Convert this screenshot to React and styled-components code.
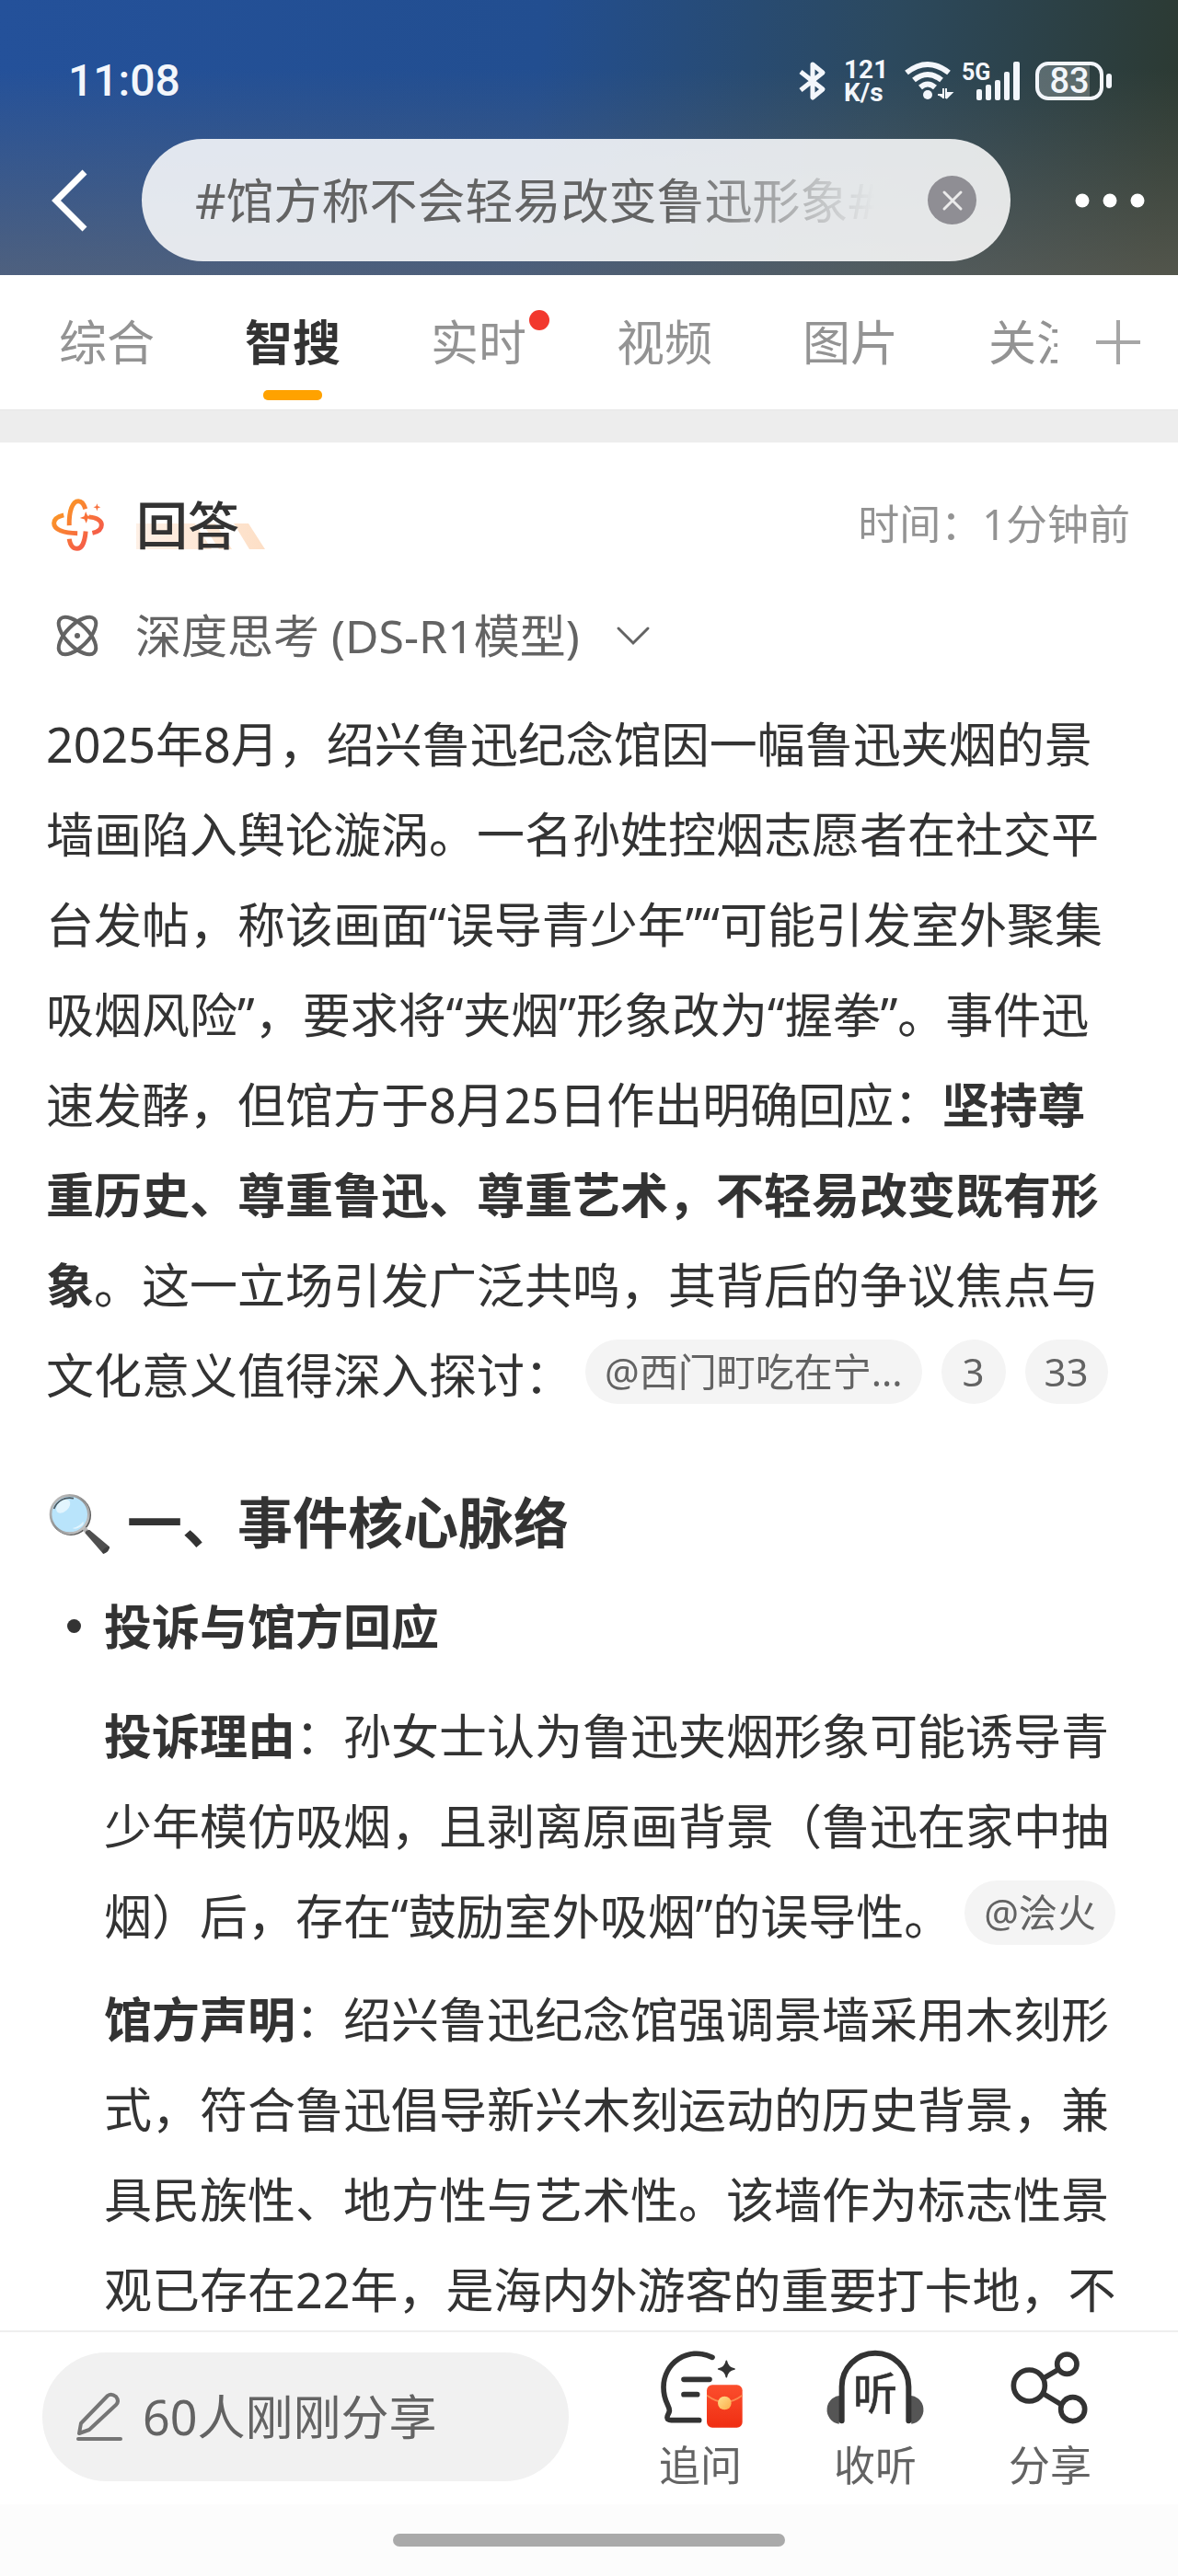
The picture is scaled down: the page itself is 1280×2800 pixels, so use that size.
import styled, { createGlobalStyle } from "styled-components";

const GlobalStyle = createGlobalStyle`
  * {
    box-sizing: border-box;
  }
  body {
    margin: 0;
    background: #ffffff;
    color: #333333;
    font-family: "Noto Sans", "Noto Sans CJK SC", sans-serif;
  }
  button,
  input {
    border: 0;
    padding: 0;
    background: none;
    color: inherit;
    font: inherit;
  }
  a {
    color: inherit;
    text-decoration: none;
  }
  h1, h2, h3, p, ul {
    margin: 0;
    padding: 0;
    font-weight: 400;
  }
  svg {
    display: block;
    flex: none;
    overflow: visible;
  }
`;

const Page = styled.div`
  height: 100vh;
  display: flex;
  flex-direction: column;
  overflow: hidden;
`;

/* header */
const Header = styled.header`
  flex: none;
  padding-bottom: 15px;
  background:
    linear-gradient(180deg, rgba(120, 112, 100, 0) 25%, rgba(120, 112, 100, 0.5) 100%),
    linear-gradient(97deg, #24519a 0%, #224e90 45%, #2c495e 74%, #2c3a33 98%);
`;

const StatusBar = styled.div`
  height: 151px;
  padding: 24px 72px 0 74px;
  display: flex;
  align-items: center;
  justify-content: space-between;
  color: #f3f6fb;
  font-family: Roboto, sans-serif;
`;

const Clock = styled.span`
  font-size: 48px;
  font-weight: 500;
`;

const StatusIcons = styled.div`
  display: flex;
  align-items: center;
`;

const NetSpeed = styled.span`
  width: 48px;
  margin: 0 18px 0 20px;
  display: flex;
  flex-direction: column;
  font-size: 28px;
  font-weight: 700;
  line-height: 25px;
`;

const Battery = styled.span`
  width: 74px;
  height: 42px;
  margin: 0 9px 0 16px;
  position: relative;
  display: flex;
  align-items: center;
  justify-content: center;
  border: 4px solid currentColor;
  border-radius: 14px;
  background: linear-gradient(90deg, rgba(255, 255, 255, 0.22) 83%, transparent 83%);
  font-size: 38px;
  font-weight: 500;
  line-height: 34px;

  &::after {
    content: "";
    position: absolute;
    right: -13px;
    width: 6px;
    height: 16px;
    border-radius: 3px;
    background: currentColor;
  }
`;

const SearchRow = styled.div`
  display: flex;
  align-items: center;
`;

const BackButton = styled.button`
  width: 154px;
  height: 133px;
  padding-left: 55px;
`;

const SearchBox = styled.form`
  flex: 1;
  min-width: 0;
  height: 133px;
  padding: 0 37px 0 58px;
  display: flex;
  align-items: center;
  gap: 58px;
  border-radius: 67px;
  background: rgba(255, 255, 255, 0.86);
`;

const SearchInput = styled.input`
  flex: 1;
  min-width: 0;
  height: 80px;
  padding-bottom: 4px;
  color: #636363;
  font-size: 52px;
  outline: none;
  mask-image: linear-gradient(90deg, #000 70%, transparent 100%);
`;

const ClearButton = styled.button`
  width: 53px;
  height: 53px;
  display: flex;
  align-items: center;
  justify-content: center;
  border-radius: 50%;
  background: #8f8e94;
`;

const MoreButton = styled.button`
  width: 182px;
  height: 133px;
  padding-left: 70px;
`;

/* tabs */
const TabBar = styled.nav`
  flex: none;
  height: 146px;
  padding-left: 64px;
  display: flex;
`;

const TabList = styled.div`
  flex: 1;
  min-width: 0;
  display: flex;
  gap: 98px;
  overflow: hidden;
`;

const Tab = styled.a`
  flex: none;
  position: relative;
  color: ${(props) => (props.$active ? "#333333" : "#939393")};
  font-size: 52px;
  font-weight: ${(props) => (props.$active ? 700 : 400)};
  line-height: 146px;

  &::after {
    content: "";
    display: ${(props) => (props.$active ? "block" : "none")};
    position: absolute;
    bottom: 10px;
    left: 20px;
    width: 64px;
    height: 11px;
    border-radius: 5px;
    background: #ffa200;
  }
`;

const Dot = styled.i`
  position: absolute;
  top: 38px;
  right: -25px;
  width: 22px;
  height: 22px;
  border-radius: 50%;
  background: #f2382e;
`;

const AddTab = styled.button`
  width: 131px;
  display: flex;
  align-items: center;
  justify-content: center;
`;

const Band = styled.div`
  flex: none;
  height: 36px;
  border-top: 1px solid #e6e6e6;
  background: #ededed;
`;

/* answer */
const Answer = styled.main`
  flex: 1;
  min-height: 0;
  padding: 54px 52px 0 50px;
  overflow: hidden auto;
  scrollbar-width: none;
`;

const AnswerHead = styled.div`
  height: 70px;
  padding-left: 6px;
  display: flex;
  align-items: center;
`;

const AnswerTitle = styled.h1`
  position: relative;
  margin-left: 35px;
  font-size: 56px;
  font-weight: 500;
  line-height: 70px;
`;

const Highlight = styled.svg`
  position: absolute;
  z-index: -1;
  left: 0;
  bottom: 8px;
`;

const AnswerTime = styled.span`
  margin-left: auto;
  color: #939393;
  font-size: 45px;
  line-height: 70px;
`;

const ThinkToggle = styled.button`
  height: 70px;
  margin-top: 51px;
  padding-left: 12px;
  display: flex;
  align-items: center;
  color: #636363;
  font-size: 50px;
  line-height: 70px;
  white-space: nowrap;

  span {
    margin: 0 40px 0 41px;
  }
`;

const Paragraph = styled.p`
  margin-top: ${(props) => props.$gap}px;
  font-size: 52px;
  line-height: 98px;

  strong {
    font-weight: 700;
  }
`;

const Source = styled.a`
  display: inline-block;
  min-width: 70px;
  height: 70px;
  margin-left: ${(props) => (props.$first ? 14 : 21)}px;
  padding: 0 21px;
  border-radius: 35px;
  background: #f4f4f4;
  color: #636363;
  font-size: 42px;
  line-height: 70px;
  text-align: center;
  vertical-align: 8px;
`;

const SectionTitle = styled.h2`
  margin-top: 71px;
  display: flex;
  align-items: center;
  gap: 18px;
  font-size: 60px;
  font-weight: 700;
  line-height: 80px;
`;

const PointList = styled.ul`
  margin-top: 24px;
  padding-left: 63px;
  list-style: none;
`;

const PointTitle = styled.h3`
  position: relative;
  font-size: 52px;
  font-weight: 700;
  line-height: 98px;

  &::before {
    content: "";
    position: absolute;
    top: 41px;
    left: -40px;
    width: 15px;
    height: 15px;
    border-radius: 50%;
    background: #333333;
  }
`;

/* bottom */
const BottomBar = styled.footer`
  flex: none;
  height: 189px;
  padding: 0 44px 4px 46px;
  display: flex;
  align-items: center;
  gap: 48px;
  border-top: 2px solid #efefef;
  background: #ffffff;
`;

const ShareInput = styled.button`
  flex: 1;
  height: 140px;
  padding-left: 37px;
  display: flex;
  align-items: center;
  gap: 21px;
  border-radius: 70px;
  background: #f1f1f1;
  color: #636363;
  font-size: 52px;
  line-height: 70px;
  white-space: nowrap;
`;

const Actions = styled.div`
  padding-top: 10px;
  display: flex;
`;

const Action = styled.button`
  width: 190px;
  display: flex;
  flex-direction: column;
  align-items: center;
  gap: 10px;
  color: #636363;
  font-size: 45px;
  line-height: 60px;
`;

const HomeArea = styled.div`
  flex: none;
  height: 78px;
  padding-top: 32px;
  background: #fcfcfc;
`;

const HomeIndicator = styled.div`
  width: 426px;
  height: 14px;
  margin: 0 auto;
  border-radius: 7px;
  background: #aaaaaa;
`;

const BluetoothIcon = () => (
  <svg width="28" height="42" viewBox="0 0 28 42" fill="none" stroke="currentColor" strokeWidth="5" strokeLinejoin="round">
    <path d="M1 11 25 30 14 39V3l11 9L1 31" />
  </svg>
);

const WifiIcon = () => (
  <svg width="52" height="42" viewBox="0 0 52 42" fill="none" stroke="currentColor" strokeWidth="6">
    <path d="M2 12Q25 -6 48 12M10 20Q25 8 40 20M17 28Q25 21 33 28" />
    <circle cx="25" cy="36" r="5" fill="currentColor" stroke="none" />
    <path d="M36 36h6V29v11M45 29v11-6h6l-6 6" strokeWidth="2" fill="currentColor" />
  </svg>
);

const SignalIcon = () => (
  <svg width="74" height="42" viewBox="-11 0 74 42" fill="currentColor">
    <text x="-1" y="20" fontFamily="Roboto, sans-serif" fontSize="25" fontWeight="700">
      5G
    </text>
    <rect x="15" y="30" width="6" height="12" rx="2" />
    <rect x="25" y="25" width="6" height="17" rx="2" />
    <rect x="35" y="20" width="6" height="22" rx="2" />
    <rect x="45" y="11" width="6" height="31" rx="2" />
    <rect x="55" y="0" width="7" height="42" rx="2" />
  </svg>
);

const LogoIcon = () => (
  <svg width="57" height="57" viewBox="46 46 172 172" fill="none">
    <defs>
      <linearGradient id="logo" x1="60" y1="60" x2="190" y2="190" gradientUnits="userSpaceOnUse">
        <stop offset="0" stopColor="#fb9f22" />
        <stop offset="0.5" stopColor="#f97b36" />
        <stop offset="1" stopColor="#f4574b" />
      </linearGradient>
    </defs>
    <g stroke="url(#logo)" strokeWidth="15">
      <path d="M104 134C103 88 114 54 134 54C146 54 153 66 157 80" />
      <path d="M86 100C64 105 54 114 54 127C54 148 86 159 131 160" />
      <path d="M158 153C155 190 144 210 130 210C116 210 107 198 104 178" />
      <path d="M168 106C196 109 210 118 210 132C210 146 198 155 180 159" />
    </g>
    <path d="M158 88 164 102 178 107 165 112 160 127 154 114 139 109 153 104Z" fill="#f97038" />
    <path d="M195 62 198 71 207 74 198 77 195 87 192 77 183 74 192 71Z" fill="#f8703c" />
  </svg>
);

const AtomIcon = () => (
  <svg width="44" height="44" viewBox="0 0 44 44" fill="none" stroke="#636363" strokeWidth="4">
    <ellipse cx="22" cy="22" rx="26" ry="12" transform="rotate(45 22 22)" />
    <ellipse cx="22" cy="22" rx="26" ry="12" transform="rotate(-45 22 22)" />
    <circle cx="22" cy="22" r="3" fill="#636363" stroke="none" />
  </svg>
);

const MagnifierIcon = () => (
  <svg width="70" height="70" viewBox="30 34 210 210">
    <defs>
      <linearGradient id="rim" x1="0" y1="0" x2="1" y2="1">
        <stop offset="0" stopColor="#c9c9c9" />
        <stop offset="0.5" stopColor="#8e8e8e" />
        <stop offset="1" stopColor="#d6d6d6" />
      </linearGradient>
    </defs>
    <circle cx="111" cy="115" r="66" fill="#5a5a5a" />
    <path d="M148 160 158 152 168 162 156 172Z" fill="#b5b5b5" />
    <path d="M157 173Q160 162 172 163L237 218Q234 236 216 240Z" fill="#4f4f4f" />
    <path d="M213 234Q218 220 235 217L237 221Q232 238 217 241Z" fill="#3f3f3f" />
    <circle cx="107" cy="112" r="62" fill="#b9e4fb" stroke="url(#rim)" strokeWidth="8" />
    <path d="M56 94A54 54 0 0 1 120 60" fill="none" stroke="#4c5960" strokeWidth="5" />
    <ellipse cx="86" cy="86" rx="27" ry="17" transform="rotate(-42 86 86)" fill="#e3f5fe" />
    <path d="M116 157Q140 152 151 135Q158 146 134 157Q124 161 116 157Z" fill="#e3f5fe" />
  </svg>
);

const PencilIcon = () => (
  <svg width="51" height="54" viewBox="0 0 51 54" fill="none" stroke="#757575" strokeWidth="4" strokeLinecap="round" strokeLinejoin="round">
    <path d="M3 45 5 34 34 4Q38 1 43 5Q47 10 43 14L14 41Z" />
    <path d="M2 51H48" />
  </svg>
);

const AskIcon = () => (
  <svg width="100" height="86" viewBox="33 40 300 258" fill="none" stroke="#333333" strokeWidth="17" strokeLinecap="round" strokeLinejoin="round">
    <defs>
      <linearGradient id="packet" x1="0" y1="0" x2="0" y2="1">
        <stop offset="0" stopColor="#fb4e2d" />
        <stop offset="1" stopColor="#f02e12" />
      </linearGradient>
      <linearGradient id="coin" x1="0" y1="0" x2="1" y2="1">
        <stop offset="0" stopColor="#ffe08c" />
        <stop offset="1" stopColor="#fbac4a" />
      </linearGradient>
    </defs>
    <path d="M222 65C140 27 63 85 63 162C63 212 84 222 82 240C81 250 74 252 75 262Q76 270 88 270H179" />
    <path d="M129 137H213M129 186H173" />
    <path d="M268 77Q272 99 294 103Q272 107 268 129Q264 107 242 103Q264 99 268 77Z" fill="#333333" strokeWidth="5" />
    <rect x="204" y="155" width="116" height="139" rx="18" fill="url(#packet)" stroke="none" />
    <path d="M206 190Q262 232 318 190" stroke="#fb8a50" strokeWidth="5" />
    <circle cx="262" cy="214" r="22" fill="url(#coin)" stroke="none" />
  </svg>
);

const ListenIcon = () => (
  <svg width="100" height="86" viewBox="600 40 300 258">
    <path d="M642 190A44 46 0 0 0 632 282ZM858 190A44 46 0 0 1 868 282Z" fill="#555555" />
    <path d="M641 272V160A109 109 0 0 1 859 160V272" fill="none" stroke="#333333" strokeWidth="18" strokeLinecap="round" />
    <text x="750" y="236" fill="#333333" stroke="#333333" strokeWidth="2" fontFamily="Noto Sans CJK SC, sans-serif" fontSize="144" fontWeight="400" textAnchor="middle">
      听
    </text>
  </svg>
);

const ShareIcon = () => (
  <svg width="100" height="86" viewBox="1170 40 300 258" fill="none" stroke="#333333" strokeWidth="17">
    <circle cx="1252" cy="157" r="51" />
    <circle cx="1375" cy="87" r="32" />
    <circle cx="1394" cy="234" r="39" />
    <path d="M1299 133 1348 104M1297 183 1360 221" />
  </svg>
);

const tabs = [
  { label: "综合" },
  { label: "智搜", active: true },
  { label: "实时", dot: true },
  { label: "视频" },
  { label: "图片" },
  { label: "关注" },
];

const actions = [
  { label: "追问", Icon: AskIcon },
  { label: "收听", Icon: ListenIcon },
  { label: "分享", Icon: ShareIcon },
];

const App = () => {
  return (
    <Page>
      <GlobalStyle />
      <Header>
        <StatusBar>
          <Clock>11:08</Clock>
          <StatusIcons>
            <BluetoothIcon />
            <NetSpeed>
              <span>121</span>
              <span>K/s</span>
            </NetSpeed>
            <WifiIcon />
            <SignalIcon />
            <Battery>83</Battery>
          </StatusIcons>
        </StatusBar>
        <SearchRow>
          <BackButton aria-label="返回">
            <svg width="42" height="68" viewBox="0 0 42 68" fill="none" stroke="#ffffff" strokeWidth="7">
              <path d="M37 3 6 34 37 65" />
            </svg>
          </BackButton>
          <SearchBox onSubmit={(e) => e.preventDefault()}>
            <SearchInput aria-label="搜索" defaultValue="#馆方称不会轻易改变鲁迅形象#" />
            <ClearButton type="reset" aria-label="清除">
              <svg width="22" height="22" viewBox="0 0 22 22" stroke="#ebebeb" strokeWidth="3" strokeLinecap="round">
                <path d="M2 2 20 20M20 2 2 20" />
              </svg>
            </ClearButton>
          </SearchBox>
          <MoreButton aria-label="更多">
            <svg width="76" height="16" viewBox="0 0 76 16" fill="#ffffff">
              <circle cx="8" cy="8" r="7.5" />
              <circle cx="38" cy="8" r="7.5" />
              <circle cx="68" cy="8" r="7.5" />
            </svg>
          </MoreButton>
        </SearchRow>
      </Header>

      <TabBar>
        <TabList>
          {tabs.map((tab) => (
            <Tab key={tab.label} href="#" $active={tab.active}>
              {tab.label}
              {tab.dot && <Dot />}
            </Tab>
          ))}
        </TabList>
        <AddTab aria-label="添加">
          <svg width="48" height="48" viewBox="0 0 48 48" stroke="#a6a6a6" strokeWidth="4">
            <path d="M24 0V48M0 24H48" />
          </svg>
        </AddTab>
      </TabBar>
      <Band />

      <Answer>
        <AnswerHead>
          <LogoIcon />
          <AnswerTitle>
            回答
            <Highlight width="142" height="28" viewBox="0 0 142 28">
              <defs>
                <linearGradient id="mark" x1="0" y1="0" x2="1" y2="0">
                  <stop offset="0" stopColor="#fef0e6" />
                  <stop offset="1" stopColor="#fddfc6" />
                </linearGradient>
              </defs>
              <path d="M0 0H64L82 28H0ZM72 0H86L104 28H90ZM106 0H122L140 28H123Z" fill="url(#mark)" />
            </Highlight>
          </AnswerTitle>
          <AnswerTime>时间：1分钟前</AnswerTime>
        </AnswerHead>

        <ThinkToggle aria-expanded="false">
          <AtomIcon />
          <span>深度思考 (DS-R1模型)</span>
          <svg width="36" height="20" viewBox="0 0 36 20" fill="none" stroke="#636363" strokeWidth="3" strokeLinecap="round">
            <path d="M2 2 18 18 34 2" />
          </svg>
        </ThinkToggle>

        <Paragraph $gap={34}>
          2025年8月，绍兴鲁迅纪念馆因一幅鲁迅夹烟的景墙画陷入舆论漩涡。一名孙姓控烟志愿者在社交平台发帖，称该画面“误导青少年”“可能引发室外聚集吸烟风险”，要求将“夹烟”形象改为“握拳”。事件迅速发酵，但馆方于8月25日作出明确回应：
          <strong>坚持尊重历史、尊重鲁迅、尊重艺术，不轻易改变既有形象</strong>
          。这一立场引发广泛共鸣，其背后的争议焦点与文化意义值得深入探讨：
          <Source href="#" $first>@西门町吃在宁...</Source>
          <Source href="#">3</Source>
          <Source href="#">33</Source>
        </Paragraph>

        <SectionTitle>
          <MagnifierIcon />
          一、事件核心脉络
        </SectionTitle>
        <PointList>
          <li>
            <PointTitle>投诉与馆方回应</PointTitle>
            <Paragraph $gap={21}>
              <strong>投诉理由</strong>
              ：孙女士认为鲁迅夹烟形象可能诱导青少年模仿吸烟，且剥离原画背景（鲁迅在家中抽烟）后，存在“鼓励室外吸烟”的误导性。
              <Source href="#" $first>@浍火</Source>
            </Paragraph>
            <Paragraph $gap={14}>
              <strong>馆方声明</strong>
              ：绍兴鲁迅纪念馆强调景墙采用木刻形式，符合鲁迅倡导新兴木刻运动的历史背景，兼具民族性、地方性与艺术性。该墙作为标志性景观已存在22年，是海内外游客的重要打卡地，不
            </Paragraph>
          </li>
        </PointList>
      </Answer>

      <BottomBar>
        <ShareInput>
          <PencilIcon />
          60人刚刚分享
        </ShareInput>
        <Actions>
          {actions.map(({ label, Icon }) => (
            <Action key={label}>
              <Icon />
              {label}
            </Action>
          ))}
        </Actions>
      </BottomBar>
      <HomeArea>
        <HomeIndicator />
      </HomeArea>
    </Page>
  );
};

export default App;
